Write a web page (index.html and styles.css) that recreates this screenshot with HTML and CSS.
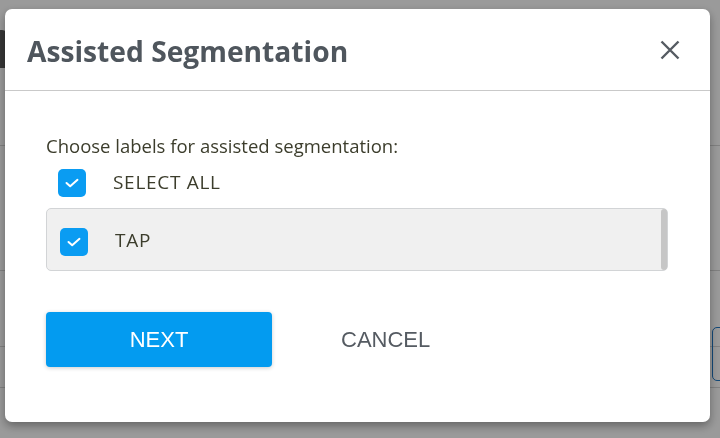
FILE: index.html
```html
<!DOCTYPE html>
<html>
<head>
<meta charset="utf-8">
<link rel="stylesheet" href="styles.css">
</head>
<body>
<div class="app">
  <div class="app-top"></div>
  <div class="app-line l1"></div>
  <div class="app-line l2"></div>
  <div class="app-line l3"></div>
  <div class="app-line l4"></div>
  <div class="app-btn"></div>
</div>
<div class="backdrop"></div>
<div class="modal">
  <div class="modal-header">
    <h1 class="title">Assisted Segmentation</h1>
    <button class="close" aria-label="close">
      <svg width="20" height="20" viewBox="0 0 20 20"><path d="M1.5 1.5 L18.5 18.5 M18.5 1.5 L1.5 18.5" stroke="#555b62" stroke-width="2.4" fill="none"/></svg>
    </button>
  </div>
  <div class="modal-body">
    <p class="prompt">Choose labels for assisted segmentation:</p>
    <label class="row select-all">
      <span class="cb"><svg width="14" height="10" viewBox="0 0 14 10"><path d="M1.5 5 L5.2 8.3 L12.5 1.8" stroke="#fff" stroke-width="2" fill="none" stroke-linecap="round" stroke-linejoin="round"/></svg></span>
      <span class="lbl">SELECT ALL</span>
    </label>
    <div class="list">
      <label class="row item">
        <span class="cb"><svg width="14" height="10" viewBox="0 0 14 10"><path d="M1.5 5 L5.2 8.3 L12.5 1.8" stroke="#fff" stroke-width="2" fill="none" stroke-linecap="round" stroke-linejoin="round"/></svg></span>
        <span class="lbl">TAP</span>
      </label>
      <div class="thumb"></div>
    </div>
    <div class="actions">
      <button class="btn next">NEXT</button>
      <button class="btn cancel">CANCEL</button>
    </div>
  </div>
</div>
</body>
</html>
```
FILE: styles.css
```css
html, body {
  margin: 0;
  padding: 0;
  width: 720px;
  height: 438px;
  overflow: hidden;
  background: #f4f4f4;
}
.app {
  position: relative;
  width: 720px;
  height: 438px;
}
.app-top {
  position: absolute;
  left: 0;
  top: 30px;
  width: 8px;
  height: 38px;
  background: #555;
  border-radius: 0 6px 0 0;
}
.app-line {
  position: absolute;
  left: 0;
  right: 0;
  height: 1px;
  background: #ccc;
}
.l1 { top: 145px; }
.l2 { top: 270px; }
.l3 { top: 346px; }
.l4 { top: 387px; }
.app-btn {
  position: absolute;
  left: 712px;
  top: 327px;
  width: 20px;
  height: 52px;
  border: 1px solid #1e73be;
  border-radius: 5px;
}
.backdrop {
  position: fixed;
  inset: 0;
  background: rgba(0, 0, 0, 0.37);
}
.modal {
  position: fixed;
  left: 5px;
  top: 9px;
  width: 705px;
  height: 413px;
  background: #fff;
  border-radius: 7px;
  box-shadow: 0 4px 10px rgba(0, 0, 0, 0.35);
  font-family: "Open Sans", "Liberation Sans", sans-serif;
  display: flex;
  flex-direction: column;
}
.modal-header {
  height: 81px;
  border-bottom: 1px solid #c9c9c9;
  display: flex;
  align-items: center;
  justify-content: space-between;
  padding: 0 30px 0 22px;
}
.title {
  margin: 0;
  font-size: 28.2px;
  font-weight: 700;
  color: #4f565d;
  padding-top: 2px;
}
.close {
  border: 0;
  background: none;
  padding: 0;
  width: 20px;
  height: 20px;
  display: flex;
  margin-top: 1px;
}
.modal-body {
  padding: 45px 41px 0 41px;
  display: flex;
  flex-direction: column;
}
.prompt {
  margin: 0;
  font-size: 18.5px;
  line-height: 20px;
  color: #3c3d2c;
}
.row {
  display: flex;
  align-items: center;
}
.cb {
  width: 28px;
  height: 28px;
  border-radius: 5px;
  background: #0a9cf2;
  display: flex;
  align-items: center;
  justify-content: center;
}
.lbl {
  font-size: 19px;
  letter-spacing: 0.7px;
  color: #3c3d2c;
  margin-left: 27px;
  margin-top: -3px;
}
.select-all {
  margin-top: 13px;
  padding-left: 12px;
  height: 28px;
}
.list {
  position: relative;
  margin-top: 11px;
  height: 61px;
  width: 620px;
  background: #f0f0f0;
  border: 1px solid #d2d4d6;
  border-radius: 5px;
  display: flex;
  align-items: center;
}
.item {
  padding-left: 13px;
  margin-top: 4px;
}
.thumb {
  position: absolute;
  right: 0;
  top: 0;
  width: 6px;
  height: 61px;
  background: #c6c6c6;
  border-radius: 3px;
}
.actions {
  margin-top: 41px;
  display: flex;
  align-items: center;
}
.btn {
  font-family: "Liberation Sans", Arial, sans-serif;
  font-size: 22px;
  border: 0;
  cursor: pointer;
}
.next {
  width: 226px;
  height: 55px;
  background: #039bf0;
  color: #fff;
  border-radius: 4px;
  box-shadow: 0 1px 4px rgba(0, 0, 0, 0.2);
  padding-top: 1px;
}
.cancel {
  background: none;
  color: #555b62;
  margin-left: 69px;
  padding: 0;
}
```
